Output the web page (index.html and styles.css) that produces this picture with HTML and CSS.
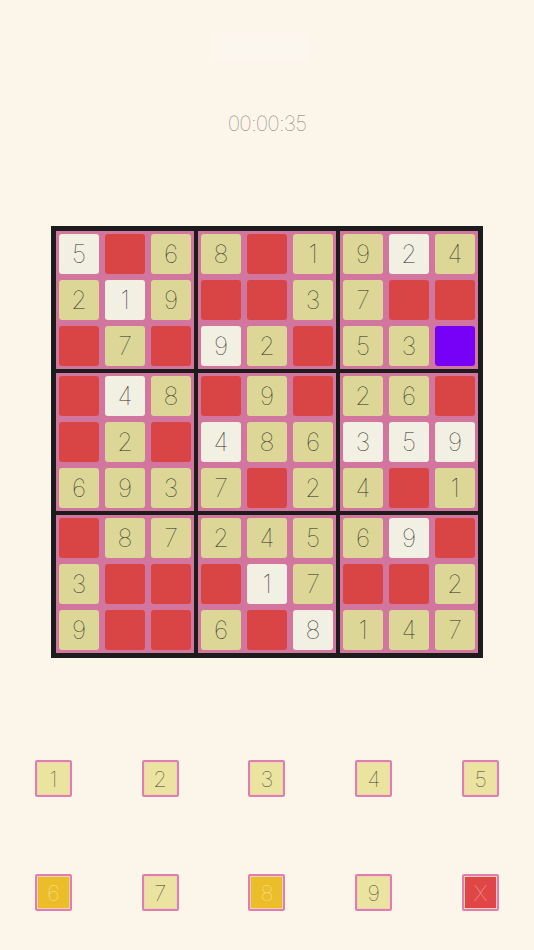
FILE: index.html
```html
<!DOCTYPE html>
<html>
<head>
<meta charset="utf-8">
<link rel="stylesheet" href="styles.css">
</head>
<body>
<div class="top-box"></div>
<div class="timer">00:00:35</div>
<div class="board">
  <div class="block">
    <div class="cell w">5</div><div class="cell r"></div><div class="cell k">6</div>
    <div class="cell k">2</div><div class="cell w">1</div><div class="cell k">9</div>
    <div class="cell r"></div><div class="cell k">7</div><div class="cell r"></div>
  </div>
  <div class="block">
    <div class="cell k">8</div><div class="cell r"></div><div class="cell k">1</div>
    <div class="cell r"></div><div class="cell r"></div><div class="cell k">3</div>
    <div class="cell w">9</div><div class="cell k">2</div><div class="cell r"></div>
  </div>
  <div class="block">
    <div class="cell k">9</div><div class="cell w">2</div><div class="cell k">4</div>
    <div class="cell k">7</div><div class="cell r"></div><div class="cell r"></div>
    <div class="cell k">5</div><div class="cell k">3</div><div class="cell p"></div>
  </div>
  <div class="block">
    <div class="cell r"></div><div class="cell w">4</div><div class="cell k">8</div>
    <div class="cell r"></div><div class="cell k">2</div><div class="cell r"></div>
    <div class="cell k">6</div><div class="cell k">9</div><div class="cell k">3</div>
  </div>
  <div class="block">
    <div class="cell r"></div><div class="cell k">9</div><div class="cell r"></div>
    <div class="cell w">4</div><div class="cell k">8</div><div class="cell k">6</div>
    <div class="cell k">7</div><div class="cell r"></div><div class="cell k">2</div>
  </div>
  <div class="block">
    <div class="cell k">2</div><div class="cell k">6</div><div class="cell r"></div>
    <div class="cell w">3</div><div class="cell w">5</div><div class="cell w">9</div>
    <div class="cell k">4</div><div class="cell r"></div><div class="cell k">1</div>
  </div>
  <div class="block">
    <div class="cell r"></div><div class="cell k">8</div><div class="cell k">7</div>
    <div class="cell k">3</div><div class="cell r"></div><div class="cell r"></div>
    <div class="cell k">9</div><div class="cell r"></div><div class="cell r"></div>
  </div>
  <div class="block">
    <div class="cell k">2</div><div class="cell k">4</div><div class="cell k">5</div>
    <div class="cell r"></div><div class="cell w">1</div><div class="cell k">7</div>
    <div class="cell k">6</div><div class="cell r"></div><div class="cell w">8</div>
  </div>
  <div class="block">
    <div class="cell k">6</div><div class="cell w">9</div><div class="cell r"></div>
    <div class="cell r"></div><div class="cell r"></div><div class="cell k">2</div>
    <div class="cell k">1</div><div class="cell k">4</div><div class="cell k">7</div>
  </div>
</div>
<div class="pad">
  <div class="slot"><div class="key">1</div></div>
  <div class="slot"><div class="key">2</div></div>
  <div class="slot"><div class="key">3</div></div>
  <div class="slot"><div class="key">4</div></div>
  <div class="slot"><div class="key">5</div></div>
  <div class="slot"><div class="key gold">6</div></div>
  <div class="slot"><div class="key">7</div></div>
  <div class="slot"><div class="key gold">8</div></div>
  <div class="slot"><div class="key">9</div></div>
  <div class="slot"><div class="key red">X</div></div>
</div>
</body>
</html>
```
FILE: styles.css
```css
html, body {
  margin: 0;
  padding: 0;
  background: #fcf5ea;
}
body {
  width: 534px;
  height: 950px;
  overflow: hidden;
  font-family: Inter, "Liberation Sans", sans-serif;
  font-weight: 100;
}
.top-box {
  width: 94px;
  height: 29px;
  margin: 33px 0 0 214px;
  background: #fcf7ee;
  border-radius: 2px;
}
.timer {
  margin-top: 50px;
  height: 24px;
  line-height: 24px;
  text-align: center;
  font-size: 21px;
  color: #77736d;
  letter-spacing: -0.8px;
}
.board {
  width: 422px;
  margin: 90px 0 0 51px;
  padding: 5px;
  background: #1c1c1c;
  display: grid;
  grid-template-columns: repeat(3, 138px);
  grid-template-rows: repeat(3, 138px);
  gap: 4px;
}
.block {
  background: #d2769f;
  padding: 3px;
  display: grid;
  grid-template-columns: repeat(3, 40px);
  grid-template-rows: repeat(3, 40px);
  gap: 6px;
}
.cell {
  border-radius: 3px;
  display: flex;
  align-items: center;
  justify-content: center;
  font-size: 25px;
  color: #2e2d29;
}
.w { background: #f2efe3; }
.k { background: #dcd796; }
.r { background: #d94545; }
.p { background: #7700f6; }
.pad {
  margin-top: 102px;
  display: grid;
  grid-template-columns: repeat(5, 1fr);
  row-gap: 77px;
}
.slot {
  display: flex;
  justify-content: center;
}
.key {
  width: 33px;
  height: 33px;
  border: 2px solid #e07fae;
  border-radius: 2px;
  background: #ebe3a0;
  display: flex;
  align-items: center;
  justify-content: center;
  font-size: 22px;
  color: #3e3c36;
  box-shadow: inset 0 0 0 1px #efd0b8;
}
.key.gold {
  background: #ebbd28;
  color: #f8e6a0;
}
.key.red {
  background: #e04646;
  color: #f4a0a8;
}
```
